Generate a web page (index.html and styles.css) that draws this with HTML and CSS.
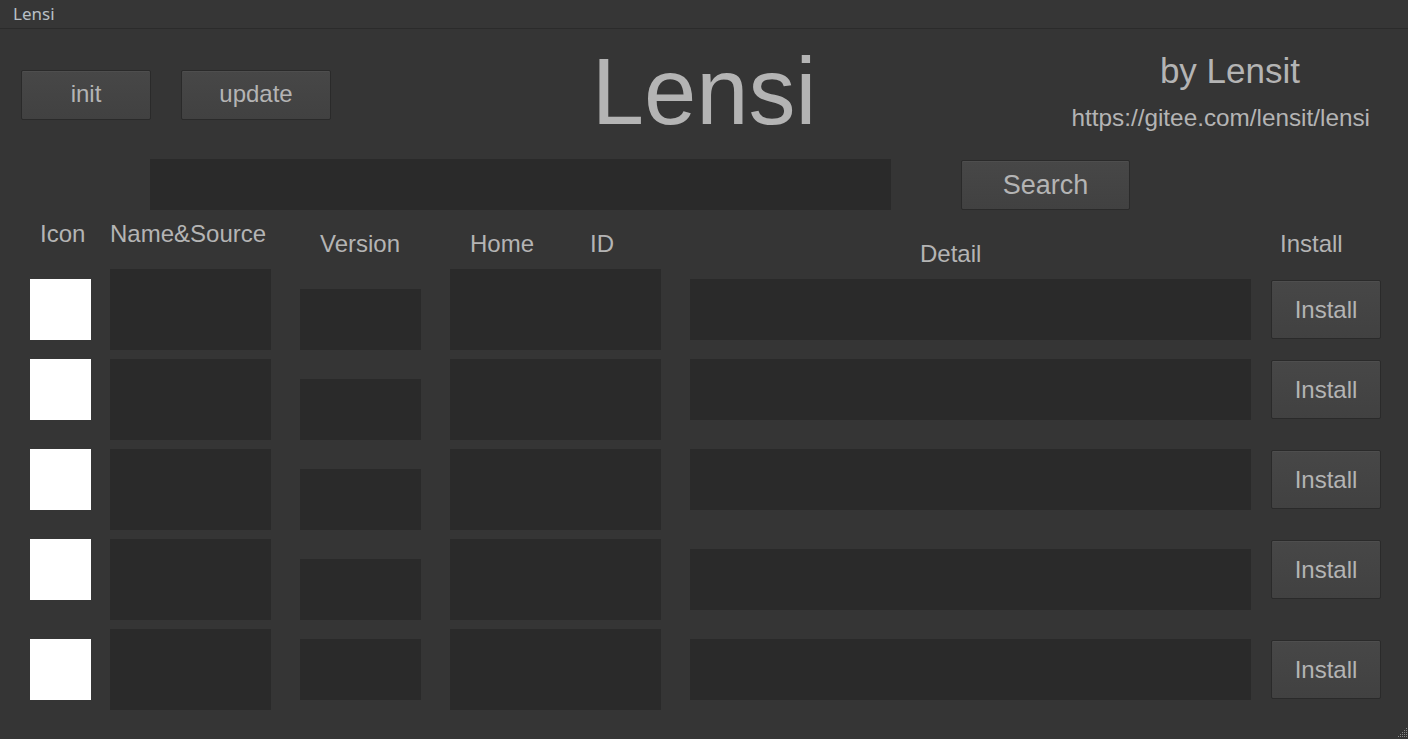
FILE: index.html
```html
<!DOCTYPE html>
<html>
<head>
<meta charset="utf-8">
<title>Lensi</title>
<link rel="stylesheet" href="styles.css">
</head>
<body>
<div class="window">
  <div class="titlebar">Lensi</div>

  <div class="top">
    <div class="top-left">
      <button class="btn btn-init">init</button>
      <button class="btn btn-update">update</button>
    </div>
    <div class="brand">Lensi</div>
    <div class="top-right">
      <div class="author">by Lensit</div>
      <div class="url">https://gitee.com/lensit/lensi</div>
    </div>
  </div>

  <div class="search-row">
    <div class="search-input"></div>
    <button class="btn btn-search">Search</button>
  </div>

  <div class="grid header">
    <div class="h h-icon">Icon</div>
    <div class="h h-name">Name&amp;Source</div>
    <div class="h h-version">Version</div>
    <div class="h h-home"><span>Home</span><span class="h-id">ID</span></div>
    <div class="h h-detail">Detail</div>
    <div class="h h-install">Install</div>
  </div>

  <div class="rows">
    <div class="grid row">
      <div class="icon off10"></div>
      <div class="box name"></div>
      <div class="box version off20"></div>
      <div class="box home"></div>
      <div class="box detail off10"></div>
      <button class="btn btn-install off11">Install</button>
    </div>
    <div class="grid row">
      <div class="icon"></div>
      <div class="box name"></div>
      <div class="box version off20"></div>
      <div class="box home"></div>
      <div class="box detail"></div>
      <button class="btn btn-install off1">Install</button>
    </div>
    <div class="grid row">
      <div class="icon"></div>
      <div class="box name"></div>
      <div class="box version off20"></div>
      <div class="box home"></div>
      <div class="box detail"></div>
      <button class="btn btn-install off1">Install</button>
    </div>
    <div class="grid row">
      <div class="icon"></div>
      <div class="box name"></div>
      <div class="box version off20"></div>
      <div class="box home"></div>
      <div class="box detail off10"></div>
      <button class="btn btn-install off1">Install</button>
    </div>
    <div class="grid row">
      <div class="icon off10"></div>
      <div class="box name"></div>
      <div class="box version off10"></div>
      <div class="box home"></div>
      <div class="box detail off10"></div>
      <button class="btn btn-install off11">Install</button>
    </div>
  </div>

  <svg class="grip" width="13" height="12" viewBox="0 0 13 12">
    <g fill="#8a8a8a">
      <rect x="11" y="1" width="1" height="1"/>
      <rect x="9" y="3" width="1" height="1"/><rect x="11" y="3" width="1" height="1"/>
      <rect x="7" y="5" width="1" height="1"/><rect x="9" y="5" width="1" height="1"/><rect x="11" y="5" width="1" height="1"/>
      <rect x="5" y="7" width="1" height="1"/><rect x="7" y="7" width="1" height="1"/><rect x="9" y="7" width="1" height="1"/><rect x="11" y="7" width="1" height="1"/>
      <rect x="3" y="9" width="1" height="1"/><rect x="5" y="9" width="1" height="1"/><rect x="7" y="9" width="1" height="1"/><rect x="9" y="9" width="1" height="1"/><rect x="11" y="9" width="1" height="1"/>
    </g>
  </svg>
</div>
</body>
</html>
```

FILE: styles.css
```css
* { box-sizing: border-box; }

html, body {
  margin: 0;
  padding: 0;
  background: #353535;
}

body {
  font-family: "Liberation Sans", Arial, sans-serif;
  color: #b4b4b4;
}

.window {
  position: relative;
  width: 1408px;
  height: 739px;
  overflow: hidden;
  background: #353535;
}

.titlebar {
  height: 29px;
  border-bottom: 1px solid #2b2b2b;
  background: #363636;
  padding-left: 13px;
  font-family: "Noto Sans", "Liberation Sans", sans-serif;
  font-size: 17px;
  line-height: 28px;
  color: #b9c0c6;
}

/* ---------- top area ---------- */
.top {
  height: 130px;
  display: grid;
  grid-template-columns: minmax(0, 1fr) auto minmax(0, 1fr);
  align-items: start;
}

.top-left {
  display: flex;
  gap: 30px;
  padding-left: 21px;
  margin-top: 41px;
}

.btn {
  font-family: "Liberation Sans", Arial, sans-serif;
  font-size: 24px;
  line-height: 28px;
  color: #b4b4b4;
  background: linear-gradient(#474747, #414141);
  border: 1px solid #2a2a2a;
  border-radius: 2px;
  box-shadow: inset 0 1px 0 #4e4e4e;
  padding: 0;
  margin: 0;
  text-align: center;
}

.btn-init { width: 130px; height: 50px; padding-bottom: 2px; }
.btn-update { width: 150px; height: 50px; padding-bottom: 2px; }

.brand {
  font-size: 94px;
  line-height: 108px;
  margin-top: 9px;
  color: #b4b4b4;
}

.top-right {
  display: flex;
  flex-direction: column;
  align-items: flex-end;
}

.author {
  font-size: 35px;
  line-height: 40px;
  margin-top: 22px;
  margin-right: 108px;
  white-space: nowrap;
}

.url {
  font-size: 24.3px;
  line-height: 28px;
  margin-top: 13px;
  margin-right: 38px;
  white-space: nowrap;
}

/* ---------- search ---------- */
.search-row {
  display: flex;
  align-items: center;
  gap: 70px;
  padding-left: 150px;
  height: 51px;
}

.search-input {
  width: 741px;
  height: 51px;
  background: #2a2a2a;
}

.btn-search {
  width: 169px;
  height: 50px;
  font-size: 27px;
  line-height: 31px;
  padding-top: 2px;
}

/* ---------- table ---------- */
.grid {
  display: grid;
  grid-template-columns: 80px 190px 150px 240px 581px 110px;
  padding-left: 30px;
  align-items: start;
}

.header {
  height: 59px;
}

.h {
  font-size: 24px;
  line-height: 28px;
  white-space: nowrap;
}

.h-icon { margin-top: 10px; margin-left: 10px; }
.h-name { margin-top: 10px; margin-left: 0; }
.h-version { margin-top: 20px; margin-left: 20px; }
.h-home { margin-top: 20px; margin-left: 20px; display: flex; }
.h-id { margin-left: 56px; }
.h-detail { margin-top: 30px; margin-left: 230px; }
.h-install { margin-top: 20px; margin-left: 9px; }

.rows {
  display: flex;
  flex-direction: column;
  gap: 9px;
}

.row {
  height: 81px;
}

.icon {
  width: 61px;
  height: 61px;
  background: #ffffff;
}

.box {
  background: #2a2a2a;
}

.name { width: 161px; height: 81px; }
.version { width: 121px; height: 61px; }
.home { width: 211px; height: 81px; }
.detail { width: 561px; height: 61px; }

.btn-install {
  width: 110px;
  height: 59px;
}

.off1 { margin-top: 1px; }
.off10 { margin-top: 10px; }
.off11 { margin-top: 11px; }
.off20 { margin-top: 20px; }

.grip {
  position: absolute;
  right: 0;
  bottom: 0;
}
```
